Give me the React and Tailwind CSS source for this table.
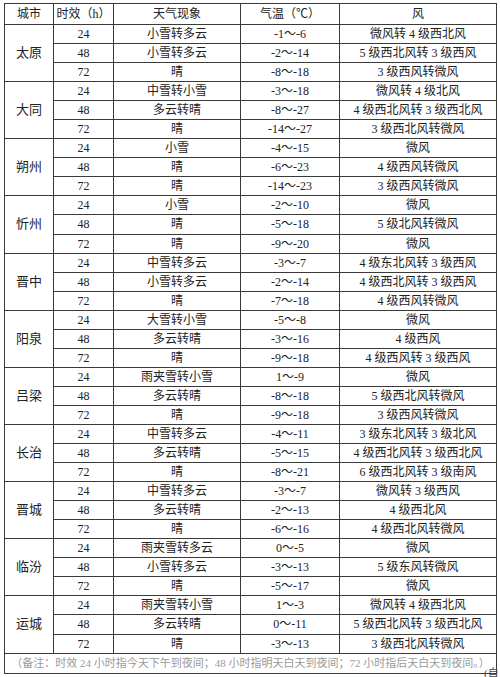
import React from "react";

const data = [
  ["太原", [
    ["24", "小雪转多云", "-1～-6", "微风转 4 级西北风"],
    ["48", "小雪转多云", "-2～-14", "5 级西北风转 3 级西风"],
    ["72", "晴", "-8～-18", "3 级西风转微风"],
  ]],
  ["大同", [
    ["24", "中雪转小雪", "-3～-18", "微风转 4 级北风"],
    ["48", "多云转晴", "-8～-27", "4 级西北风转 3 级西北风"],
    ["72", "晴", "-14～-27", "3 级西北风转微风"],
  ]],
  ["朔州", [
    ["24", "小雪", "-4～-15", "微风"],
    ["48", "晴", "-6～-23", "4 级西风转微风"],
    ["72", "晴", "-14～-23", "3 级西风转微风"],
  ]],
  ["忻州", [
    ["24", "小雪", "-2～-10", "微风"],
    ["48", "晴", "-5～-18", "5 级北风转微风"],
    ["72", "晴", "-9～-20", "微风"],
  ]],
  ["晋中", [
    ["24", "中雪转多云", "-3～-7", "4 级东北风转 3 级西风"],
    ["48", "小雪转多云", "-2～-14", "4 级西北风转 3 级西风"],
    ["72", "晴", "-7～-18", "4 级西风转微风"],
  ]],
  ["阳泉", [
    ["24", "大雪转小雪", "-5～-8", "微风"],
    ["48", "多云转晴", "-3～-16", "4 级西风"],
    ["72", "晴", "-9～-18", "4 级西风转 3 级西风"],
  ]],
  ["吕梁", [
    ["24", "雨夹雪转小雪", "1～-9", "微风"],
    ["48", "多云转晴", "-8～-18", "5 级西北风转微风"],
    ["72", "晴", "-9～-18", "3 级西风转微风"],
  ]],
  ["长治", [
    ["24", "中雪转多云", "-4～-11", "3 级东北风转 3 级北风"],
    ["48", "多云转晴", "-5～-15", "4 级西北风转 3 级西北风"],
    ["72", "晴", "-8～-21", "6 级西北风转 3 级南风"],
  ]],
  ["晋城", [
    ["24", "中雪转多云", "-3～-7", "微风转 3 级西风"],
    ["48", "多云转晴", "-2～-13", "4 级西北风"],
    ["72", "晴", "-6～-16", "4 级西北风转微风"],
  ]],
  ["临汾", [
    ["24", "雨夹雪转多云", "0～-5", "微风"],
    ["48", "小雪转多云", "-3～-13", "5 级东风转微风"],
    ["72", "晴", "-5～-17", "微风"],
  ]],
  ["运城", [
    ["24", "雨夹雪转小雪", "1～-3", "微风转 4 级西北风"],
    ["48", "多云转晴", "0～-11", "5 级西北风转 3 级西北风"],
    ["72", "晴", "-3～-13", "3 级西北风转微风"],
  ]],
];

const cell = "border border-[#3a3a3a] p-0 text-center align-middle whitespace-nowrap";

export default function App() {
  return (
    <div className="relative w-[500px] h-[677px] bg-white overflow-hidden pl-[4px] pt-[3px] text-[#222] text-[12px]" style={{ fontFamily: '"Liberation Serif", "Noto Sans CJK SC", serif' }}>
      <table className="border-collapse table-fixed w-[492px]">
        <colgroup>
          <col className="w-[49px]" />
          <col className="w-[60px]" />
          <col className="w-[127px]" />
          <col className="w-[99px]" />
          <col className="w-[157px]" />
        </colgroup>
        <thead>
          <tr className="h-[21px] leading-[20px]">
            <th className={`${cell} font-normal`}>城市</th>
            <th className={`${cell} font-normal`}>时效（h）</th>
            <th className={`${cell} font-normal`}>天气现象</th>
            <th className={`${cell} font-normal`}>气温（℃）</th>
            <th className={`${cell} font-normal`}>风</th>
          </tr>
        </thead>
        <tbody>
          {data.map(([city, rows]) =>
            rows.map((r, i) => (
              <tr key={city + i} className="h-[19.06px] leading-[18px]">
                {i === 0 && (
                  <td rowSpan={3} className={`${cell} text-[13px]`}>{city}</td>
                )}
                <td className={cell}>{r[0]}</td>
                <td className={cell}>{r[1]}</td>
                <td className={cell}>{r[2]}</td>
                <td className={cell}>{r[3]}</td>
              </tr>
            ))
          )}
          <tr className="h-[20px] leading-[19px]">
            <td colSpan={5} className={`${cell} text-[11px] text-[#9a9a9a]`}>
              （备注：时效 24 小时指今天下午到夜间；48 小时指明天白天到夜间；72 小时指后天白天到夜间。）
            </td>
          </tr>
        </tbody>
      </table>
      <span className="absolute left-[484px] top-[668px] text-[11px] text-[#444] leading-none">(自</span>
    </div>
  );
}
